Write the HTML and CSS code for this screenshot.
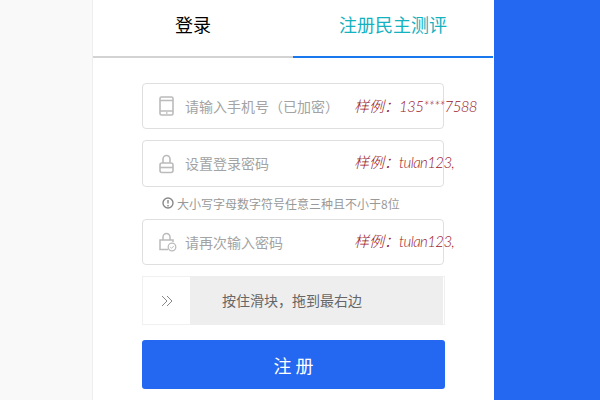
FILE: index.html
```html
<!DOCTYPE html>
<html lang="zh-CN">
    <head>
        <title>注册民主测评</title>
        <meta charset="utf-8" />
        <link rel="stylesheet" href="styles.css">
    </head>
    <body>
        <div class="side"></div>
        <div class="panel">
            <div class="tabs">
                <a class="tab">登录</a>
                <a class="tab active">注册民主测评</a>
            </div>
            <form class="form">
                <div class="field">
                    <svg class="icon" width="16" height="20" viewBox="0 0 16 20">
                        <rect x="1" y="1" width="13" height="18" rx="1.5" fill="none" stroke="#bbb" stroke-width="1.6" />
                        <path d="M1 4.5h13M1 15h13M7 17h1.5" fill="none" stroke="#bbb" stroke-width="1.4" />
                    </svg>
                    <span class="hint">请输入手机号（已加密）</span>
                    <span class="sample">样例：<span class="value">135****7588</span></span>
                </div>
                <div class="field second">
                    <svg class="icon" width="16" height="20" viewBox="0 0 16 20">
                        <path d="M4 9V5a3.5 3.5 0 0 1 7 0v4" fill="none" stroke="#bbb" stroke-width="1.6" />
                        <rect x="1" y="9" width="13" height="9.5" rx="2" fill="none" stroke="#bbb" stroke-width="1.6" />
                        <path d="M1 13.5h13" stroke="#bbb" stroke-width="1.6" />
                    </svg>
                    <span class="hint">设置登录密码</span>
                    <span class="sample">样例：<span class="value">tulan123,</span></span>
                </div>
                <p class="tip">
                    <svg width="12" height="12" viewBox="0 0 12 12">
                        <circle cx="6" cy="6" r="5" fill="none" stroke="#888" stroke-width="1.4" />
                        <path d="M6 3v3.6M6 8v1.4" stroke="#888" stroke-width="1.4" />
                    </svg>
                    大小写字母数字符号任意三种且不小于8位
                </p>
                <div class="field third">
                    <svg class="icon" width="18" height="20" viewBox="0 0 18 20">
                        <path d="M4 8V5a3.5 3.5 0 0 1 7 0v3" fill="none" stroke="#bbb" stroke-width="1.5" />
                        <path d="M9 17.5H1V8h13v2" fill="none" stroke="#bbb" stroke-width="1.5" />
                        <circle cx="13" cy="15" r="3.8" fill="#fff" stroke="#bbb" stroke-width="1.3" />
                        <path d="M11.2 15l1.4 1.3 2.2-2.4" fill="none" stroke="#bbb" stroke-width="1" />
                    </svg>
                    <span class="hint">请再次输入密码</span>
                    <span class="sample">样例：<span class="value">tulan123,</span></span>
                </div>
                <div class="slider">
                    <div class="handle">
                        <svg width="12" height="12" viewBox="0 0 12 12">
                            <path d="M1 1l5 5-5 5M6 1l5 5-5 5" fill="none" stroke="#888" stroke-width="1" />
                        </svg>
                    </div>
                    <div class="track">按住滑块，拖到最右边</div>
                </div>
                <button class="submit" type="button">注 册</button>
            </form>
        </div>
        <div class="aside"></div>
    </body>
</html>
```

FILE: styles.css
```css
html, body {
    margin: 0px;
    padding: 0px;
    height: 400px;
    overflow: hidden;
}
body {
    display: flex;
    background: #ffffff;
    font-family: "Noto Sans CJK SC", "Liberation Sans", sans-serif;
}
.side {
    width: 92px;
    background: #f9f9f9;
    border-right: 1px solid #eeeeee;
}
.panel {
    width: 400px;
    background: #ffffff;
}
.aside {
    flex: 1;
    margin-left: 1px;
    background: #2468f2;
}
.tabs {
    display: flex;
    height: 58px;
}
.tab {
    flex: 1;
    border-bottom: 2px solid #d3d3d3;
    color: #000000;
    font-size: 18px;
    line-height: 48px;
    text-align: center;
}
.active {
    border-bottom-color: #1a78ef;
    color: #14b1bf;
}
.form {
    display: flex;
    flex-direction: column;
    margin: 25px 49px 0px;
}
.field {
    display: flex;
    align-items: center;
    box-sizing: border-box;
    border: 1px solid #dfdfdf;
    border-radius: 4px;
    padding-left: 16px;
    width: 302px;
    height: 46px;
}
.second {
    margin-top: 11px;
    height: 47px;
}
.third {
    height: 46px;
}
.icon {
    flex: none;
    margin-right: 10px;
}
.third .icon {
    margin-right: 8px;
}
.hint {
    width: 169px;
    flex: none;
    color: #a3a3a3;
    font-size: 14px;
    white-space: nowrap;
}
.second .hint {
    margin-bottom: 2px;
}
.sample {
    margin-bottom: 2px;
    color: #981828;
    font-size: 15px;
    font-style: italic;
    font-weight: 300;
    white-space: nowrap;
}
.second .sample, .third .sample {
    margin-bottom: 4px;
}
.value {
    font-family: "Lato", "Noto Sans CJK SC", sans-serif;
    letter-spacing: -0.6px;
}
.tip {
    display: flex;
    align-items: center;
    gap: 3px;
    margin: 0px 0px 0px 20px;
    height: 32px;
    color: #999999;
    font-size: 12px;
}
.slider {
    display: flex;
    margin-top: 11px;
    box-sizing: border-box;
    border: 1px solid #f0f0f0;
    width: 303px;
    height: 49px;
}
.handle {
    display: flex;
    align-items: center;
    justify-content: center;
    width: 47px;
    background: #ffffff;
}
.track {
    flex: 1;
    margin-right: 1px;
    margin-top: -1px;
    margin-bottom: -1px;
    padding-left: 32px;
    background: #eeeeee;
    color: #666666;
    font-size: 14px;
    line-height: 49px;
}
.submit {
    margin-top: 15px;
    border: none;
    border-radius: 3px;
    padding: 0px;
    width: 303px;
    height: 49px;
    background: #2468f2;
    color: #ffffff;
    font-family: "Noto Sans CJK SC", sans-serif;
    font-size: 18px;
    cursor: pointer;
}
```
